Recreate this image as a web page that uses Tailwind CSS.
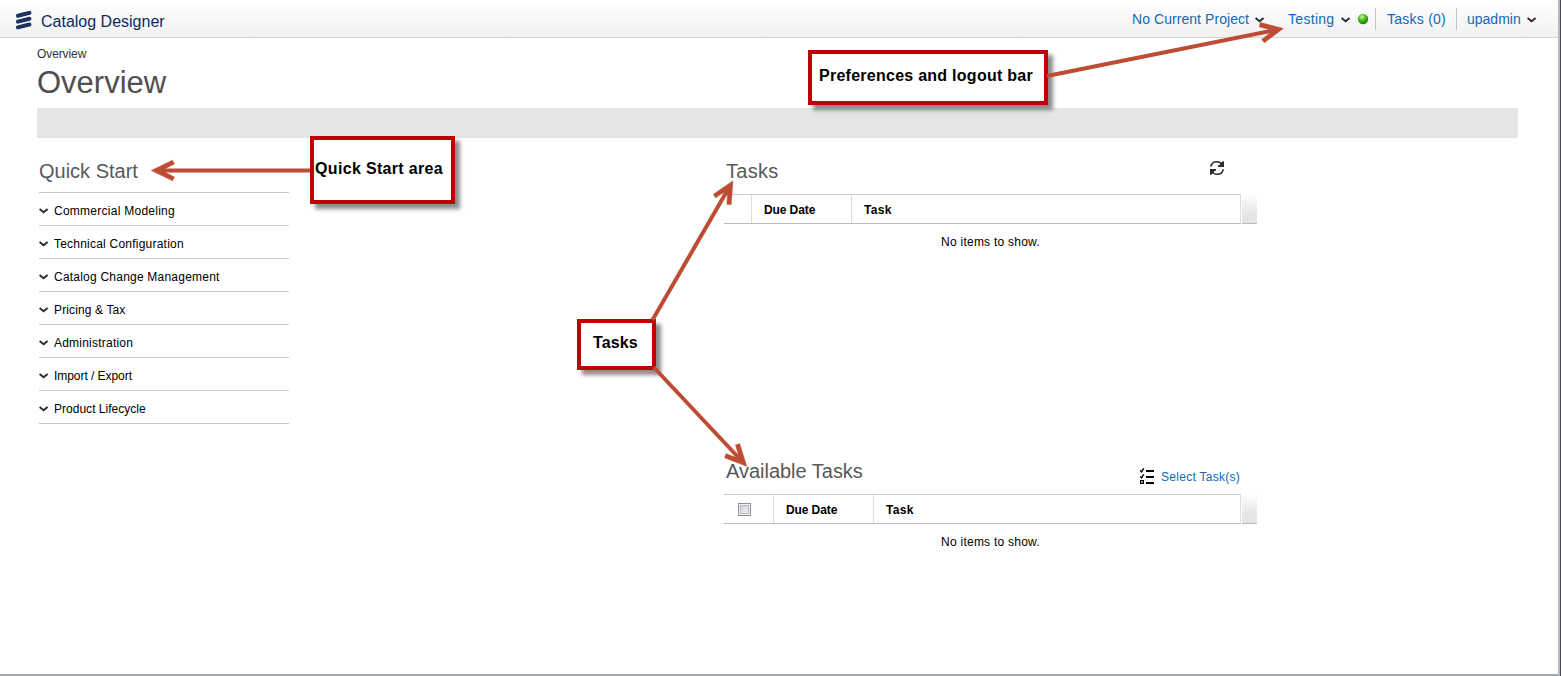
<!DOCTYPE html>
<html lang="en">
<head>
<meta charset="utf-8">
<title>Catalog Designer</title>
<script src="https://cdn.jsdelivr.net/npm/@tailwindcss/browser@4"></script>
</head>
<body class="font-['Liberation_Sans',Arial,sans-serif] bg-white text-black">
<svg class="hidden">
  <symbol id="chev" viewBox="0 0 10 6"><path d="M.6 1 L4.600 4.3 L8.600 1" fill="none" stroke="#2b2b2b" stroke-width="1.9"/></symbol>
</svg>
<div class="relative w-[1561px] h-[676px] overflow-hidden flex">
  <div class="w-[1558px] h-[676px] flex flex-col border-b-2 border-[#a3a5b0]">
    <header class="h-[38px] shrink-0 flex items-center border-b border-[#d6d6d6] bg-linear-to-b from-white to-[#f1f1f1] pl-4 pr-[22px]">
      <svg class="w-4 h-[19px] mt-[3px]" viewBox="0 0 16 19"><g stroke="#1f3061" stroke-width="4" stroke-linecap="round"><path d="M1.9 4.8 L13.4 1.9"/><path d="M1.9 10.6 L13.4 7.7"/><path d="M1.9 16.4 L13.4 13.5"/></g></svg>
      <span class="ml-[9px] mt-[7px] text-base leading-5 text-[#0b2a5e]">Catalog Designer</span>
      <nav class="ml-auto flex items-center h-[22px] text-sm leading-[22px] text-[#1268b8] mt-px">
        <span class="w-[117px] whitespace-nowrap tracking-[0.06px]">No Current Project</span>
        <svg class="w-[10px] h-[6px] ml-[6px] mr-[-1px] mt-[1px]"><use href="#chev"/></svg>
        <span class="ml-6 w-[47px] tracking-[0.3px]">Testing</span>
        <svg class="w-[10px] h-[6px] ml-[6px] mr-[-1px] mt-[1px]"><use href="#chev"/></svg>
        <svg class="w-3 h-3 ml-[7px]" viewBox="0 0 12 12"><defs><radialGradient id="led" cx=".4" cy=".3" r=".7"><stop offset="0" stop-color="#d5f7b0"/><stop offset=".35" stop-color="#63d02c"/><stop offset="1" stop-color="#1c7a08"/></radialGradient></defs><circle cx="6" cy="6" r="5.2" fill="url(#led)"/></svg>
        <span class="ml-[6px] w-px h-[22px] bg-[#c4c4c4]"></span>
        <span class="ml-[11px] w-[60px] whitespace-nowrap tracking-[0.25px]">Tasks (0)</span>
        <span class="ml-[9px] w-px h-[22px] bg-[#c4c4c4]"></span>
        <span class="ml-[10px] w-[54px]">upadmin</span>
        <svg class="w-[10px] h-[6px] ml-[6px] mr-[-1px] mt-[1px]"><use href="#chev"/></svg>
      </nav>
    </header>
    <main class="pl-[37px] pr-[40px] pt-[8px]">
      <div class="text-xs leading-4 text-[#333] tracking-[-0.1px]">Overview</div>
      <h1 class="text-[31px] leading-[38px] text-[#4f4f4f] mt-[2px]">Overview</h1>
      <div class="h-[30px] mt-[6px] bg-[#e5e5e5]"></div>
      <div class="flex">
        <section class="w-[252px] pl-[2px]">
          <h2 class="text-xl leading-6 h-[54px] pt-[21px] text-[#58585a]">Quick Start</h2>
          <ul class="border-t border-[#c9c9c9] text-xs tracking-[0.22px]">
            <li class="h-[33px] flex items-center border-b border-[#c9c9c9] pt-[4px] tracking-[0.26px]"><svg class="w-[10px] h-[6px] mr-[5px]"><use href="#chev"/></svg>Commercial Modeling</li>
            <li class="h-[33px] flex items-center border-b border-[#c9c9c9] pt-[4px]"><svg class="w-[10px] h-[6px] mr-[5px]"><use href="#chev"/></svg>Technical Configuration</li>
            <li class="h-[33px] flex items-center border-b border-[#c9c9c9] pt-[4px]"><svg class="w-[10px] h-[6px] mr-[5px]"><use href="#chev"/></svg>Catalog Change Management</li>
            <li class="h-[33px] flex items-center border-b border-[#c9c9c9] pt-[4px] tracking-[0.13px]"><svg class="w-[10px] h-[6px] mr-[5px]"><use href="#chev"/></svg>Pricing &amp; Tax</li>
            <li class="h-[33px] flex items-center border-b border-[#c9c9c9] pt-[4px]"><svg class="w-[10px] h-[6px] mr-[5px]"><use href="#chev"/></svg>Administration</li>
            <li class="h-[33px] flex items-center border-b border-[#c9c9c9] pt-[4px] tracking-[-0.05px]"><svg class="w-[10px] h-[6px] mr-[5px]"><use href="#chev"/></svg>Import / Export</li>
            <li class="h-[33px] flex items-center border-b border-[#c9c9c9] pt-[4px] tracking-[0.02px]"><svg class="w-[10px] h-[6px] mr-[5px]"><use href="#chev"/></svg>Product Lifecycle</li>
          </ul>
        </section>
        <div class="ml-[435px] w-[533px]">
          <section class="h-[300px]">
            <div class="h-[56px] flex justify-between pl-[2px] pr-[32px]">
              <h2 class="text-xl leading-6 pt-[21px] text-[#58585a] tracking-[0.3px]">Tasks</h2>
              <svg class="w-4 h-4 mt-[22px]" viewBox="0 0 16 16"><g fill="none" stroke="#2b2b2b" stroke-width="1.6"><path d="M1.7 6.6 C2.4 3.4 5 1.7 7.8 1.7 C9.8 1.7 11.3 2.4 12.6 3.8"/><path d="M14.3 9.4 C13.6 12.6 11 14.3 8.2 14.3 C6.2 14.3 4.7 13.6 3.4 12.2"/></g><path d="M15 1 V7 H9 V5.500 L11 4.500 L13 1.800 Z M1 15 V9 H7 V10.500 L5 11.500 L3 14.200 Z" fill="#2b2b2b"/></svg>
            </div>
            <div class="flex h-[30px] text-xs font-bold">
              <div class="flex w-[517px] border-y border-t-[#c9c9c9] border-b-[#b5bcc4] border-r border-r-[#dcdcdc] leading-[30px]">
                <div class="w-[28px] border-r border-[#dedede]"></div>
                <div class="w-[100px] border-r border-[#dedede] pl-3 tracking-[-0.1px]">Due Date</div>
                <div class="pl-3 tracking-[0.3px]">Task</div>
              </div>
              <div class="ml-px w-[15px] border-b border-[#b5bcc4] bg-linear-to-b from-white via-[#e5e5e5] via-70% to-[#e5e5e5]"></div>
            </div>
            <p class="text-xs tracking-[0.24px] leading-4 mt-[10px] text-center">No items to show.</p>
          </section>
          <section>
            <div class="h-[56px] flex pl-[2px] pr-[17px]">
              <h2 class="text-xl leading-6 pt-[21px] text-[#58585a] tracking-[-0.02px]">Available Tasks</h2>
              <div class="ml-auto flex h-4 mt-[31px] text-xs leading-4 text-[#1268b8]">
                <svg class="w-4 h-4 mr-[6px] -mt-px" viewBox="0 0 16 16"><path d="M7 2h8v2H7z M7 8h8v2H7z M7 14h8v2H7z" fill="#000"/><path d="M1.200 2.6 L2.500 3.8 L4.700 .3 M1.200 8.6 L2.500 9.8 L4.700 6.3" fill="none" stroke="#000" stroke-width="1.4"/><path d="M1.600 12.600h2.800v2.800h-2.800z" fill="none" stroke="#000" stroke-width="1.2"/></svg>
                <span class="w-[79px] whitespace-nowrap tracking-[0.28px]">Select Task(s)</span>
              </div>
            </div>
            <div class="flex h-[30px] text-xs font-bold">
              <div class="flex w-[517px] border-y border-t-[#c9c9c9] border-b-[#b5bcc4] border-r border-r-[#dcdcdc] leading-[30px]">
                <div class="w-[50px] border-r border-[#dedede] pl-[14px] pt-[8px]"><div class="w-[13px] h-[13px] border border-[#8e8f8f] bg-[#f4f4f4] p-px"><div class="w-[9px] h-[9px] border border-[#b4b9c0] bg-linear-to-br from-[#cbcfd5] to-[#f6f6f6]"></div></div></div>
                <div class="w-[100px] border-r border-[#dedede] pl-3 tracking-[-0.1px]">Due Date</div>
                <div class="pl-3 tracking-[0.3px]">Task</div>
              </div>
              <div class="ml-px w-[15px] border-b border-[#b5bcc4] bg-linear-to-b from-white via-[#e5e5e5] via-70% to-[#e5e5e5]"></div>
            </div>
            <p class="text-xs tracking-[0.24px] leading-4 mt-[10px] text-center">No items to show.</p>
          </section>
        </div>
      </div>
    </main>
  </div>
  <div class="w-[3px] h-[676px] bg-[#b9b9bd] border-r border-[#4a4553]"></div>

  <!-- Callouts -->
  <div class="absolute left-[808px] top-[50px] w-[240px] h-[55px] border-4 border-[#c00000] bg-white shadow-[5px_5px_4px_rgba(0,0,0,0.45)] pl-[7px] pt-[12px] text-base leading-5 font-bold whitespace-nowrap tracking-[0.26px]">Preferences and logout bar</div>
  <div class="absolute left-[310px] top-[136px] w-[145px] h-[68px] border-4 border-[#c00000] bg-white shadow-[5px_5px_4px_rgba(0,0,0,0.45)] pl-px pt-[19px] text-base leading-5 font-bold whitespace-nowrap tracking-[0.33px]">Quick Start area</div>
  <div class="absolute left-[577px] top-[319px] w-[79px] h-[51px] border-4 border-[#c00000] bg-white shadow-[5px_5px_4px_rgba(0,0,0,0.45)] pl-[12px] pt-[10px] text-base leading-5 font-bold whitespace-nowrap tracking-[0.1px]">Tasks</div>
  <svg class="absolute left-0 top-0" width="1561" height="676" fill="none" stroke="#be4b34" stroke-width="4">
    <defs><path id="head" d="M1.800 0 L-19.500 -10.300 L-21.500 -6.500 L-12.500 -2 L-12.500 2 L-21.500 6.500 L-19.500 10.300 Z" fill="#be4b34" stroke="#be4b34" stroke-width=".5"/></defs>
    <path d="M310 170.5 H162"/><use href="#head" transform="translate(153 170.5) rotate(180)"/>
    <path d="M1047 76 L1272 30.800"/><use href="#head" transform="translate(1281.500 28.8) rotate(-11.4)"/>
    <path d="M652.500 320 L727 191"/><use href="#head" transform="translate(732 182.500) rotate(-60)"/>
    <path d="M653.500 367 L738 457"/><use href="#head" transform="translate(745.500 465) rotate(46.800)"/>
  </svg>
</div>
</body>
</html>
